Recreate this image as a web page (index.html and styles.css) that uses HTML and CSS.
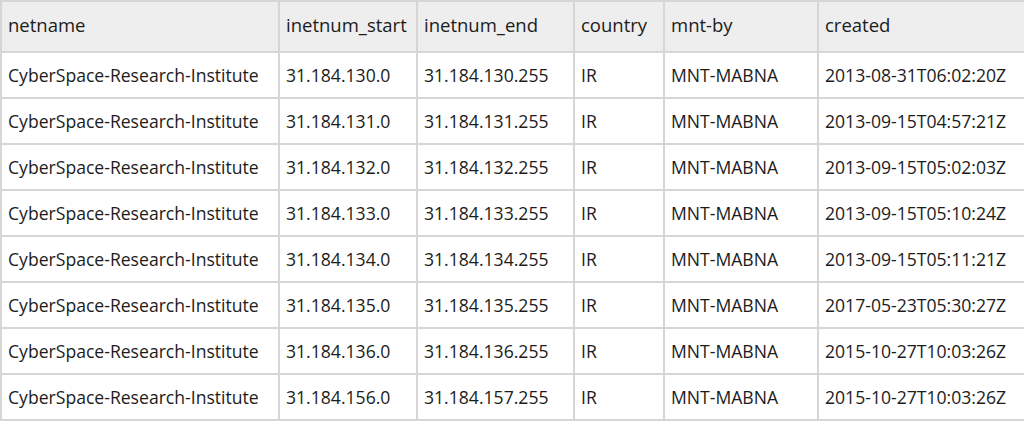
FILE: index.html
```html
<!DOCTYPE html>
<html>
<head>
<meta charset="utf-8">
<link rel="stylesheet" href="styles.css">
</head>
<body>
<table class="grid">
  <colgroup>
    <col class="c1"><col class="c2"><col class="c3"><col class="c4"><col class="c5"><col class="c6">
  </colgroup>
  <thead>
    <tr class="head"><th>netname</th><th>inetnum_start</th><th>inetnum_end</th><th>country</th><th>mnt-by</th><th>created</th></tr>
  </thead>
  <tbody>
    <tr><td>CyberSpace-Research-Institute</td><td>31.184.130.0</td><td>31.184.130.255</td><td>IR</td><td>MNT-MABNA</td><td>2013-08-31T06:02:20Z</td></tr>
    <tr><td>CyberSpace-Research-Institute</td><td>31.184.131.0</td><td>31.184.131.255</td><td>IR</td><td>MNT-MABNA</td><td>2013-09-15T04:57:21Z</td></tr>
    <tr><td>CyberSpace-Research-Institute</td><td>31.184.132.0</td><td>31.184.132.255</td><td>IR</td><td>MNT-MABNA</td><td>2013-09-15T05:02:03Z</td></tr>
    <tr><td>CyberSpace-Research-Institute</td><td>31.184.133.0</td><td>31.184.133.255</td><td>IR</td><td>MNT-MABNA</td><td>2013-09-15T05:10:24Z</td></tr>
    <tr><td>CyberSpace-Research-Institute</td><td>31.184.134.0</td><td>31.184.134.255</td><td>IR</td><td>MNT-MABNA</td><td>2013-09-15T05:11:21Z</td></tr>
    <tr><td>CyberSpace-Research-Institute</td><td>31.184.135.0</td><td>31.184.135.255</td><td>IR</td><td>MNT-MABNA</td><td>2017-05-23T05:30:27Z</td></tr>
    <tr><td>CyberSpace-Research-Institute</td><td>31.184.136.0</td><td>31.184.136.255</td><td>IR</td><td>MNT-MABNA</td><td>2015-10-27T10:03:26Z</td></tr>
    <tr><td>CyberSpace-Research-Institute</td><td>31.184.156.0</td><td>31.184.157.255</td><td>IR</td><td>MNT-MABNA</td><td>2015-10-27T10:03:26Z</td></tr>
  </tbody>
</table>
</body>
</html>
```
FILE: styles.css
```css
html, body {
  margin: 0;
  padding: 0;
  background: #ffffff;
}
.grid {
  width: 1024px;
  table-layout: fixed;
  border-collapse: collapse;
  font-family: "Open Sans", "Noto Sans", sans-serif;
  font-size: 17.6px;
  color: #1c1c1c;
}
.c1 { width: 278px; }
.c2 { width: 138px; }
.c3 { width: 157px; }
.c4 { width: 90px; }
.c5 { width: 154px; }
.c6 { width: 207px; }
.grid th, .grid td {
  border: 2px solid #d6d6d6;
  padding: 0 6px;
  text-align: left;
  white-space: nowrap;
  vertical-align: middle;
}
.grid th {
  font-weight: 400;
  font-size: 18.5px;
  background: #eeeeee;
  height: 45px;
  padding-bottom: 4px;
}
.grid td {
  height: 44px;
}
```
